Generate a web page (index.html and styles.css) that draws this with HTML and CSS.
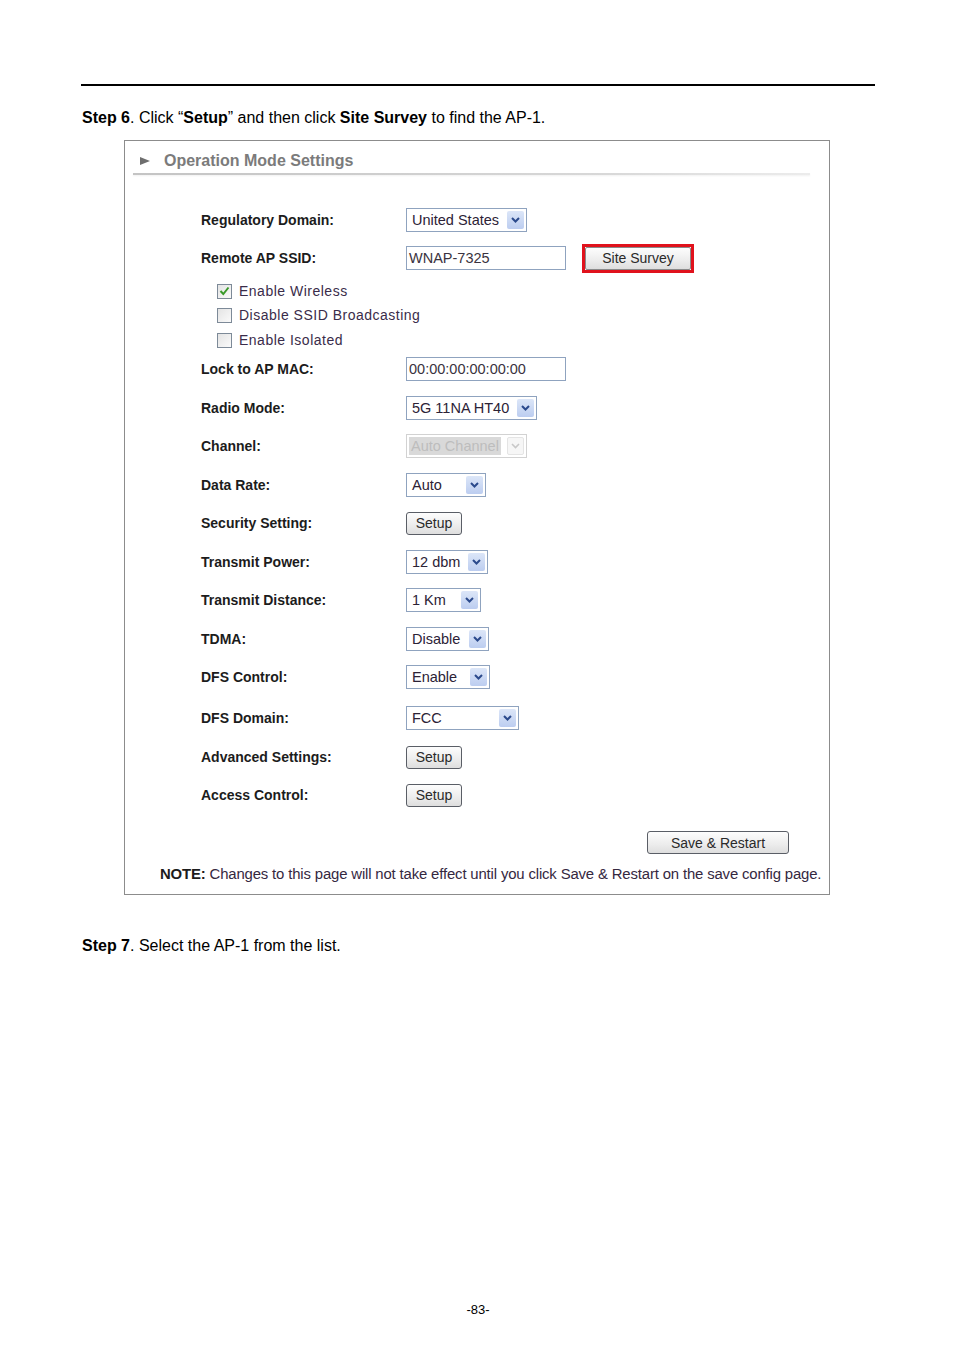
FILE: index.html
```html
<!DOCTYPE html>
<html>
<head>
<meta charset="utf-8">
<link rel="stylesheet" href="styles.css">
</head>
<body>
<div class="page">
  <div class="rule"></div>
  <p class="step step6"><b>Step 6</b>. Click “<b>Setup</b>” and then click <b>Site Survey</b> to find the AP-1.</p>

  <div class="shot">
    <div class="title">
      <span class="tri"></span>
      <span class="title-text">Operation Mode Settings</span>
    </div>
    <div class="title-line"></div>

    <div class="form">
      <div class="row first">
        <span class="label">Regulatory Domain:</span>
        <span class="sel w121"><span class="val">United States</span><span class="arrow"><svg width="9" height="6" viewBox="0 0 9 6"><path d="M1 1 L4.5 4.5 L8 1" fill="none" stroke="#2b4a8c" stroke-width="2"/></svg></span></span>
      </div>
      <div class="row">
        <span class="label">Remote AP SSID:</span>
        <span class="input">WNAP-7325</span>
        <span class="red-frame"><span class="btn btn-survey">Site Survey</span></span>
      </div>
      <div class="row chk-row g9">
        <span class="chk checked"><svg width="11" height="10" viewBox="0 0 11 10"><path d="M1.5 5 L4.3 8 L9.5 1.5" fill="none" stroke="#3a9a2a" stroke-width="2"/></svg></span>
        <span class="chk-label">Enable Wireless</span>
      </div>
      <div class="row chk-row g0">
        <span class="chk"></span>
        <span class="chk-label">Disable SSID Broadcasting</span>
      </div>
      <div class="row chk-row g1">
        <span class="chk"></span>
        <span class="chk-label">Enable Isolated</span>
      </div>
      <div class="row g5">
        <span class="label">Lock to AP MAC:</span>
        <span class="input">00:00:00:00:00:00</span>
      </div>
      <div class="row g15">
        <span class="label">Radio Mode:</span>
        <span class="sel w131"><span class="val">5G 11NA HT40</span><span class="arrow"><svg width="9" height="6" viewBox="0 0 9 6"><path d="M1 1 L4.5 4.5 L8 1" fill="none" stroke="#2b4a8c" stroke-width="2"/></svg></span></span>
      </div>
      <div class="row">
        <span class="label">Channel:</span>
        <span class="sel w121 disabled"><span class="val"><span class="hl">Auto Channel</span></span><span class="arrow"><svg width="9" height="6" viewBox="0 0 9 6"><path d="M1 1 L4.5 4.5 L8 1" fill="none" stroke="#c8c8c8" stroke-width="1.6"/></svg></span></span>
      </div>
      <div class="row g15">
        <span class="label">Data Rate:</span>
        <span class="sel w80"><span class="val">Auto</span><span class="arrow"><svg width="9" height="6" viewBox="0 0 9 6"><path d="M1 1 L4.5 4.5 L8 1" fill="none" stroke="#2b4a8c" stroke-width="2"/></svg></span></span>
      </div>
      <div class="row">
        <span class="label">Security Setting:</span>
        <span class="btn btn-setup">Setup</span>
      </div>
      <div class="row g15">
        <span class="label">Transmit Power:</span>
        <span class="sel w82"><span class="val">12 dbm</span><span class="arrow"><svg width="9" height="6" viewBox="0 0 9 6"><path d="M1 1 L4.5 4.5 L8 1" fill="none" stroke="#2b4a8c" stroke-width="2"/></svg></span></span>
      </div>
      <div class="row">
        <span class="label">Transmit Distance:</span>
        <span class="sel w75"><span class="val">1 Km</span><span class="arrow"><svg width="9" height="6" viewBox="0 0 9 6"><path d="M1 1 L4.5 4.5 L8 1" fill="none" stroke="#2b4a8c" stroke-width="2"/></svg></span></span>
      </div>
      <div class="row g15">
        <span class="label">TDMA:</span>
        <span class="sel w83"><span class="val">Disable</span><span class="arrow"><svg width="9" height="6" viewBox="0 0 9 6"><path d="M1 1 L4.5 4.5 L8 1" fill="none" stroke="#2b4a8c" stroke-width="2"/></svg></span></span>
      </div>
      <div class="row">
        <span class="label">DFS Control:</span>
        <span class="sel w84"><span class="val">Enable</span><span class="arrow"><svg width="9" height="6" viewBox="0 0 9 6"><path d="M1 1 L4.5 4.5 L8 1" fill="none" stroke="#2b4a8c" stroke-width="2"/></svg></span></span>
      </div>
      <div class="row g17">
        <span class="label">DFS Domain:</span>
        <span class="sel w113"><span class="val">FCC</span><span class="arrow"><svg width="9" height="6" viewBox="0 0 9 6"><path d="M1 1 L4.5 4.5 L8 1" fill="none" stroke="#2b4a8c" stroke-width="2"/></svg></span></span>
      </div>
      <div class="row g15">
        <span class="label">Advanced Settings:</span>
        <span class="btn btn-setup">Setup</span>
      </div>
      <div class="row">
        <span class="label">Access Control:</span>
        <span class="btn btn-setup">Setup</span>
      </div>
    </div>

    <div class="save-row">
      <span class="btn btn-save">Save &amp; Restart</span>
    </div>
    <p class="note"><b>NOTE:</b> Changes to this page will not take effect until you click Save &amp; Restart on the save config page.</p>
  </div>

  <p class="step step7"><b>Step 7</b>. Select the AP-1 from the list.</p>

  <p class="pageno">-83-</p>
</div>
</body>
</html>
```

FILE: styles.css
```css
html, body {
  margin: 0;
  padding: 0;
  background: #ffffff;
}

body {
  font-family: "Liberation Sans", Arial, sans-serif;
  color: #000;
}

.page {
  width: 954px;
  height: 1350px;
  padding-left: 81px;
  box-sizing: border-box;
  padding-top: 84px;
}

.rule {
  width: 794px;
  height: 2px;
  background: #000;
}

.step {
  margin: 0;
  font-size: 16px;
  line-height: 18px;
}

.step6 {
  margin-top: 23px;
  margin-left: 1px;
}

.shot {
  margin-top: 13px;
  margin-left: 43px;
  width: 706px;
  height: 755px;
  box-sizing: border-box;
  border: 1px solid #8c8c8c;
  padding-top: 10px;
}

.title {
  display: flex;
  align-items: center;
  height: 20px;
  padding-left: 15px;
}

.tri {
  width: 0;
  height: 0;
  border-top: 4px solid transparent;
  border-bottom: 4px solid transparent;
  border-left: 10px solid #6e6e6e;
  margin-right: 14px;
}

.title-text {
  font-size: 16px;
  font-weight: bold;
  color: #7b7b7b;
}

.title-line {
  margin-top: 2px;
  margin-left: 8px;
  width: 677px;
  height: 2px;
  background: linear-gradient(to right, #c4c4c4, #d8d8d8 70%, #ececec);
  box-shadow: 0 1px 2px #f0f0f0;
}

.form {
  margin-top: 33px;
  padding-left: 76px;
}

.row {
  display: flex;
  align-items: center;
  height: 24px;
  margin-top: 14px;
}

.row.first { margin-top: 0; }
.row.g0 { margin-top: 0; }
.row.g1 { margin-top: 1px; }
.row.g5 { margin-top: 5px; }
.row.g9 { margin-top: 9px; }
.row.g15 { margin-top: 15px; }
.row.g17 { margin-top: 17px; }

.label {
  width: 205px;
  flex: none;
  font-size: 14px;
  font-weight: bold;
  color: #1c1c1c;
}

.sel {
  display: flex;
  align-items: center;
  justify-content: space-between;
  height: 24px;
  box-sizing: border-box;
  border: 1px solid #8fa3bf;
  background: #fff;
  padding: 1px 2px 1px 5px;
  font-size: 14.5px;
  color: #2c2236;
}

.w75 { width: 75px; }
.w80 { width: 80px; }
.w82 { width: 82px; }
.w83 { width: 83px; }
.w84 { width: 84px; }
.w113 { width: 113px; }
.w121 { width: 121px; }
.w131 { width: 131px; }

.val {
  white-space: nowrap;
}

.arrow {
  width: 17px;
  height: 18px;
  flex: none;
  display: flex;
  align-items: center;
  justify-content: center;
  background: linear-gradient(to bottom, #dce6f8, #bccdf0);
  border-radius: 2px;
}

.sel.disabled {
  border-color: #d2d2d2;
  color: #bdbdbd;
  padding-left: 2px;
}

.sel.disabled .hl {
  background: #d9d9d9;
  padding: 1px 2px;
}

.sel.disabled .arrow {
  background: #f6f6f6;
  border: 1px solid #e4e4e4;
  box-sizing: border-box;
}

.input {
  width: 160px;
  height: 24px;
  box-sizing: border-box;
  border: 1px solid #8fa3bf;
  padding-left: 2px;
  display: flex;
  align-items: center;
  font-size: 14.5px;
  color: #3a3340;
}

.red-frame {
  margin-left: 16px;
  width: 112px;
  height: 29px;
  box-sizing: border-box;
  border: 3px solid #e0121c;
  display: flex;
}

.btn {
  display: flex;
  align-items: center;
  justify-content: center;
  box-sizing: border-box;
  font-size: 14px;
  color: #2a2a2a;
  background: linear-gradient(to bottom, #fdfdfd, #ececec 60%, #dedede);
  border: 1px solid #5a5e66;
  border-radius: 3px;
}

.btn-survey {
  flex: 1;
  border: 1px solid #8a8a8a;
  border-radius: 2px;
}

.btn-setup {
  width: 56px;
  height: 23px;
}

.chk-row {
  padding-left: 16px;
}

.chk {
  width: 15px;
  height: 15px;
  box-sizing: border-box;
  border: 1px solid #7d8a98;
  background: linear-gradient(135deg, #e4e4e4, #fafafa);
  display: flex;
  align-items: center;
  justify-content: center;
  margin-right: 7px;
}

.chk-label {
  font-size: 14px;
  color: #3a2c4a;
  letter-spacing: 0.5px;
}

.save-row {
  display: flex;
  justify-content: flex-end;
  margin-top: 24px;
  padding-right: 40px;
}

.btn-save {
  width: 142px;
  height: 23px;
}

.note {
  margin: 11px 0 0 35px;
  font-size: 14.9px;
  line-height: 18px;
  color: #35283f;
  letter-spacing: -0.15px;
  white-space: nowrap;
}

.note b {
  color: #1c1c1c;
}

.step7 {
  margin-top: 42px;
  margin-left: 1px;
}

.pageno {
  margin: 346px 0 0 0;
  width: 794px;
  text-align: center;
  font-size: 13px;
  line-height: 18px;
}
```
